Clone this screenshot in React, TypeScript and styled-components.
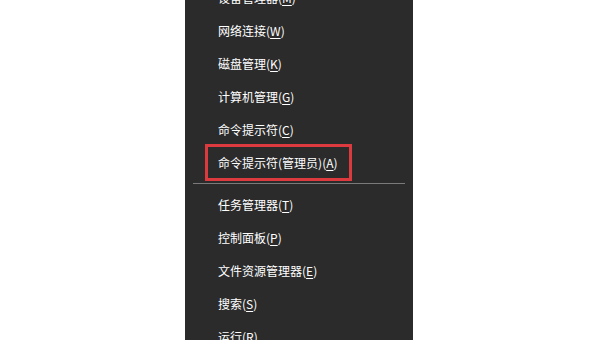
import styled, { createGlobalStyle } from "styled-components";

const GlobalStyle = createGlobalStyle`
  html, body {
    margin: 0;
    padding: 0;
    background: #ffffff;
    overflow: hidden;
  }
  body {
    font-family: "Noto Sans CJK SC", "Noto Sans", sans-serif;
  }
`;

const Page = styled.div`
  width: 600px;
  height: 340px;
  display: flex;
  justify-content: flex-start;
  overflow: hidden;
`;

// the menu runs off the top of the screenshot, so its first row is cut
const Menu = styled.ul`
  list-style: none;
  margin: -19px 0 0 185px;
  padding: 0;
  width: 228px;
  height: 400px;
  background: #2b2b2b;
  display: flex;
  flex-direction: column;
`;

const Item = styled.li<{ $boxed?: boolean }>`
  height: 33px;
  display: flex;
  align-items: center;
  padding-left: ${(p) => (p.$boxed ? "20px" : "33px")};
  color: #ffffff;
  font-size: 12px;
  line-height: 17px;
  white-space: nowrap;
`;

const Label = styled.span<{ $boxed?: boolean }>`
  display: inline-block;
  border: ${(p) => (p.$boxed ? "3px solid #dc3a3f" : "none")};
  padding: ${(p) => (p.$boxed ? "7px 11px 7px 10px" : "0")};
`;

const Key = styled.u`
  text-decoration-thickness: 1px;
  text-underline-offset: 2px;
`;

const Separator = styled.li`
  height: 1px;
  margin: 4px 8px;
  background: #7a7a7a;
`;

type Entry = { name: string; key: string; boxed?: boolean } | "sep";

const entries: Entry[] = [
  { name: "设备管理器", key: "M" },
  { name: "网络连接", key: "W" },
  { name: "磁盘管理", key: "K" },
  { name: "计算机管理", key: "G" },
  { name: "命令提示符", key: "C" },
  { name: "命令提示符(管理员)", key: "A", boxed: true },
  "sep",
  { name: "任务管理器", key: "T" },
  { name: "控制面板", key: "P" },
  { name: "文件资源管理器", key: "E" },
  { name: "搜索", key: "S" },
  { name: "运行", key: "R" },
];

const App = () => {
  return (
    <>
      <GlobalStyle />
      <Page>
        <Menu>
          {entries.map((e, i) =>
            e === "sep" ? (
              <Separator key={i} />
            ) : (
              <Item key={i} $boxed={e.boxed}>
                <Label $boxed={e.boxed}>
                  {e.name}(<Key>{e.key}</Key>)
                </Label>
              </Item>
            )
          )}
        </Menu>
      </Page>
    </>
  );
};

export default App;
